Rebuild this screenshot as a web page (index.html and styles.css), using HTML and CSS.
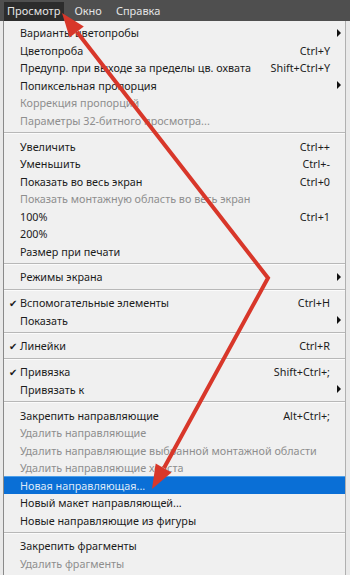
FILE: index.html
```html
<!DOCTYPE html>
<html lang="ru">
<head>
<meta charset="utf-8">
<title>Просмотр</title>
<link rel="stylesheet" href="styles.css">
</head>
<body>
<div class="screen">
  <div class="menubar">
    <span class="mb active">Просмотр</span>
    <span class="mb">Окно</span>
    <span class="mb">Справка</span>
  </div>
  <div class="menu">
    <div class="item"><span class="chk"></span><span class="label">Варианты цветопробы</span><span class="sc"></span><span class="sub"></span></div>
    <div class="item"><span class="chk"></span><span class="label">Цветопроба</span><span class="sc">Ctrl+Y</span><span class="nosub"></span></div>
    <div class="item"><span class="chk"></span><span class="label">Предупр. при выходе за пределы цв. охвата</span><span class="sc">Shift+Ctrl+Y</span><span class="nosub"></span></div>
    <div class="item"><span class="chk"></span><span class="label">Попиксельная пропорция</span><span class="sc"></span><span class="sub"></span></div>
    <div class="item dis"><span class="chk"></span><span class="label">Коррекция пропорций</span><span class="sc"></span><span class="nosub"></span></div>
    <div class="item dis"><span class="chk"></span><span class="label">Параметры 32-битного просмотра...</span><span class="sc"></span><span class="nosub"></span></div>
    <div class="sep"></div>
    <div class="item"><span class="chk"></span><span class="label">Увеличить</span><span class="sc">Ctrl++</span><span class="nosub"></span></div>
    <div class="item"><span class="chk"></span><span class="label">Уменьшить</span><span class="sc">Ctrl+-</span><span class="nosub"></span></div>
    <div class="item"><span class="chk"></span><span class="label">Показать во весь экран</span><span class="sc">Ctrl+0</span><span class="nosub"></span></div>
    <div class="item dis"><span class="chk"></span><span class="label">Показать монтажную область во весь экран</span><span class="sc"></span><span class="nosub"></span></div>
    <div class="item"><span class="chk"></span><span class="label">100%</span><span class="sc">Ctrl+1</span><span class="nosub"></span></div>
    <div class="item"><span class="chk"></span><span class="label">200%</span><span class="sc"></span><span class="nosub"></span></div>
    <div class="item"><span class="chk"></span><span class="label">Размер при печати</span><span class="sc"></span><span class="nosub"></span></div>
    <div class="sep"></div>
    <div class="item"><span class="chk"></span><span class="label">Режимы экрана</span><span class="sc"></span><span class="sub"></span></div>
    <div class="sep"></div>
    <div class="item"><span class="chk">✔</span><span class="label">Вспомогательные элементы</span><span class="sc">Ctrl+H</span><span class="nosub"></span></div>
    <div class="item"><span class="chk"></span><span class="label">Показать</span><span class="sc"></span><span class="sub"></span></div>
    <div class="sep"></div>
    <div class="item"><span class="chk">✔</span><span class="label">Линейки</span><span class="sc">Ctrl+R</span><span class="nosub"></span></div>
    <div class="sep"></div>
    <div class="item"><span class="chk">✔</span><span class="label">Привязка</span><span class="sc">Shift+Ctrl+;</span><span class="nosub"></span></div>
    <div class="item"><span class="chk"></span><span class="label">Привязать к</span><span class="sc"></span><span class="sub"></span></div>
    <div class="sep"></div>
    <div class="item"><span class="chk"></span><span class="label">Закрепить направляющие</span><span class="sc">Alt+Ctrl+;</span><span class="nosub"></span></div>
    <div class="item dis"><span class="chk"></span><span class="label">Удалить направляющие</span><span class="sc"></span><span class="nosub"></span></div>
    <div class="item dis"><span class="chk"></span><span class="label">Удалить направляющие выбранной монтажной области</span><span class="sc"></span><span class="nosub"></span></div>
    <div class="item dis"><span class="chk"></span><span class="label">Удалить направляющие холста</span><span class="sc"></span><span class="nosub"></span></div>
    <div class="item hl"><span class="chk"></span><span class="label">Новая направляющая...</span><span class="sc"></span><span class="nosub"></span></div>
    <div class="item"><span class="chk"></span><span class="label">Новый макет направляющей...</span><span class="sc"></span><span class="nosub"></span></div>
    <div class="item"><span class="chk"></span><span class="label">Новые направляющие из фигуры</span><span class="sc"></span><span class="nosub"></span></div>
    <div class="sep"></div>
    <div class="item"><span class="chk"></span><span class="label">Закрепить фрагменты</span><span class="sc"></span><span class="nosub"></span></div>
    <div class="item dis"><span class="chk"></span><span class="label">Удалить фрагменты</span><span class="sc"></span><span class="nosub"></span></div>
  </div>
  <svg class="arrows" width="350" height="575" viewBox="0 0 350 575">
    <polyline points="77,32 268,278 164,468" fill="none" stroke="#d8372a" stroke-width="4" stroke-linejoin="miter"/>
    <polygon points="62,13 83.8,26.5 69.6,37.5" fill="#d8372a"/>
    <polygon points="152,489 171.5,472.4 155.7,463.6" fill="#d8372a"/>
  </svg>
</div>
</body>
</html>
```
FILE: styles.css
```css
html, body {
  margin: 0;
  padding: 0;
  background: #e9e9e9;
}
.screen {
  position: relative;
  width: 350px;
  height: 575px;
  overflow: hidden;
  font-family: "Noto Sans", "Open Sans", sans-serif;
  font-size: 10.8px;
  background: #e9e9e9;
}
.menubar {
  height: 21px;
  background: #4f4f4f;
  display: flex;
  align-items: flex-end;
  padding-left: 4px;
}
.mb {
  color: #e4e4e4;
  height: 19px;
  line-height: 18px;
  padding: 0 4px 0 3px;
  margin-right: 7px;
  font-size: 11px;
}
.mb.active {
  background: #2c2c2c;
}
.menu {
  margin-left: 3px;
  width: 343px;
  height: 554px;
  background: #f0f0f0;
  border-left: 1px solid #8a8a8a;
  border-right: 1px solid #b0b0b0;
  padding-top: 3px;
  box-sizing: border-box;
}
.item {
  height: 17.5px;
  display: flex;
  align-items: center;
  color: #1c1c1c;
  white-space: nowrap;
}
.item.dis {
  color: #8e8e8e;
}
.item.hl {
  background: #0a6fd6;
  box-shadow: inset 0 1px 0 #4ea0ea;
  color: #dde9f8;
}
.chk {
  width: 15px;
  flex: none;
  font-size: 10px;
  text-align: center;
  padding-left: 1px;
  color: #1c1c1c;
}
.label {
  flex: 1;
}
.sc {
  flex: none;
  text-align: right;
}
.sub, .nosub {
  width: 15px;
  flex: none;
  display: flex;
  justify-content: center;
}
.sub::before {
  content: "";
  width: 0;
  height: 0;
  border-top: 4px solid transparent;
  border-bottom: 4px solid transparent;
  border-left: 4px solid #111;
  margin-left: 3px;
}
.sep {
  height: 8.3px;
  box-sizing: border-box;
  padding-top: 3px;
}
.sep::before {
  content: "";
  display: block;
  height: 1px;
  background: #b8b8b8;
  border-bottom: 1px solid #fbfbfb;
}
.arrows {
  position: absolute;
  left: 0;
  top: 0;
  pointer-events: none;
}
```
